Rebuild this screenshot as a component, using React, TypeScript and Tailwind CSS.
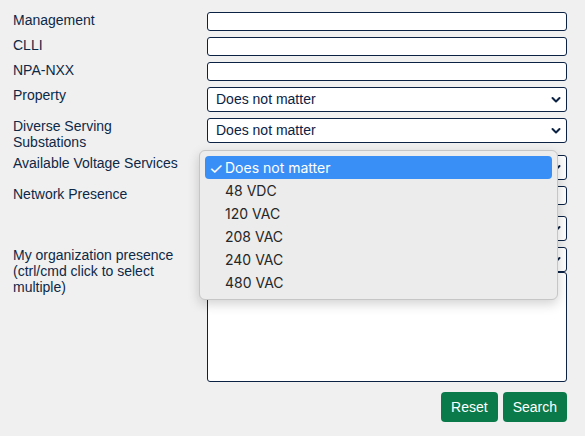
import { ReactNode } from "react";

const veld =
  "w-full rounded-[3px] border border-[#0b2244] bg-white font-['Liberation_Sans',Arial,sans-serif] text-[14px] text-[#0b2244]";

function Chevron() {
  return (
    <svg
      className="absolute right-[5px] top-1/2 -translate-y-1/2"
      width="10"
      height="7"
      viewBox="0 0 10 7"
      fill="none"
    >
      <path d="M1.5 1.5 5 5 8.5 1.5" stroke="#0b2244" strokeWidth="2" strokeLinecap="round" strokeLinejoin="round" />
    </svg>
  );
}

function Keuze({ waarde = "Does not matter" }: { waarde?: string }) {
  return (
    <div className={`relative flex h-[25px] items-center px-2 ${veld}`}>
      <span>{waarde}</span>
      <Chevron />
    </div>
  );
}

function Tekstveld() {
  return <div className={`h-[19px] ${veld}`} />;
}

function Rij({ label, children, className = "" }: { label: ReactNode; children: ReactNode; className?: string }) {
  return (
    <div className={`flex ${className}`}>
      <div className="w-[194px] shrink-0 pr-2 text-[14px] leading-[16px] text-[#0d2847]">{label}</div>
      <div className="flex-1">{children}</div>
    </div>
  );
}

const opties = ["48 VDC", "120 VAC", "208 VAC", "240 VAC", "480 VAC"];

export default function App() {
  return (
    <div className="h-[436px] w-[585px] bg-[#f0f0f0] pl-[13px] pr-[18px] pt-[12px] font-['Liberation_Sans',Arial,sans-serif]">
      <div className="flex flex-col gap-[6px]">
        <Rij label="Management">
          <Tekstveld />
        </Rij>
        <Rij label="CLLI">
          <Tekstveld />
        </Rij>
        <Rij label="NPA-NXX">
          <Tekstveld />
        </Rij>
        <Rij label="Property">
          <Keuze />
        </Rij>
        <Rij label={<>Diverse Serving<br />Substations</>}>
          <Keuze />
        </Rij>
        <Rij label="Available Voltage Services" className="-mt-px">
          <div className="relative">
            <Keuze />
            {/* Open keuzelijst */}
            <div className="absolute left-[-8px] top-[-5px] z-10 w-[359px] rounded-[6px] border border-[#c6c6c6] bg-[#ececec] px-[5px] py-[5px] font-['Inter',sans-serif] text-[14px] text-[#262626] shadow-[0_4px_12px_rgba(0,0,0,0.18)]">
              <div className="flex h-[23px] items-center rounded-[4px] bg-[#3a8ff7] text-white">
                <span className="w-[20px] pl-[4px] text-[16px] leading-none">✓</span>
                <span>Does not matter</span>
              </div>
              {opties.map((o) => (
                <div key={o} className="flex h-[23px] items-center pl-[20px]">
                  {o}
                </div>
              ))}
            </div>
          </div>
        </Rij>
        <Rij label="Network Presence">
          <div className="flex flex-col gap-[11px]">
            <Tekstveld />
            <Keuze />
          </div>
        </Rij>
        <Rij label={<>My organization presence<br />(ctrl/cmd click to select<br />multiple)</>}>
          <Keuze />
          <div className={`h-[110px] ${veld}`} />
        </Rij>
      </div>
      <div className="mt-[10px] flex justify-end gap-[5px]">
        <button className="h-[30px] rounded-[4px] bg-[#0b7a4b] px-[10px] text-[14px] text-white">Reset</button>
        <button className="h-[30px] rounded-[4px] bg-[#0b7a4b] px-[10px] text-[14px] text-white">Search</button>
      </div>
    </div>
  );
}
